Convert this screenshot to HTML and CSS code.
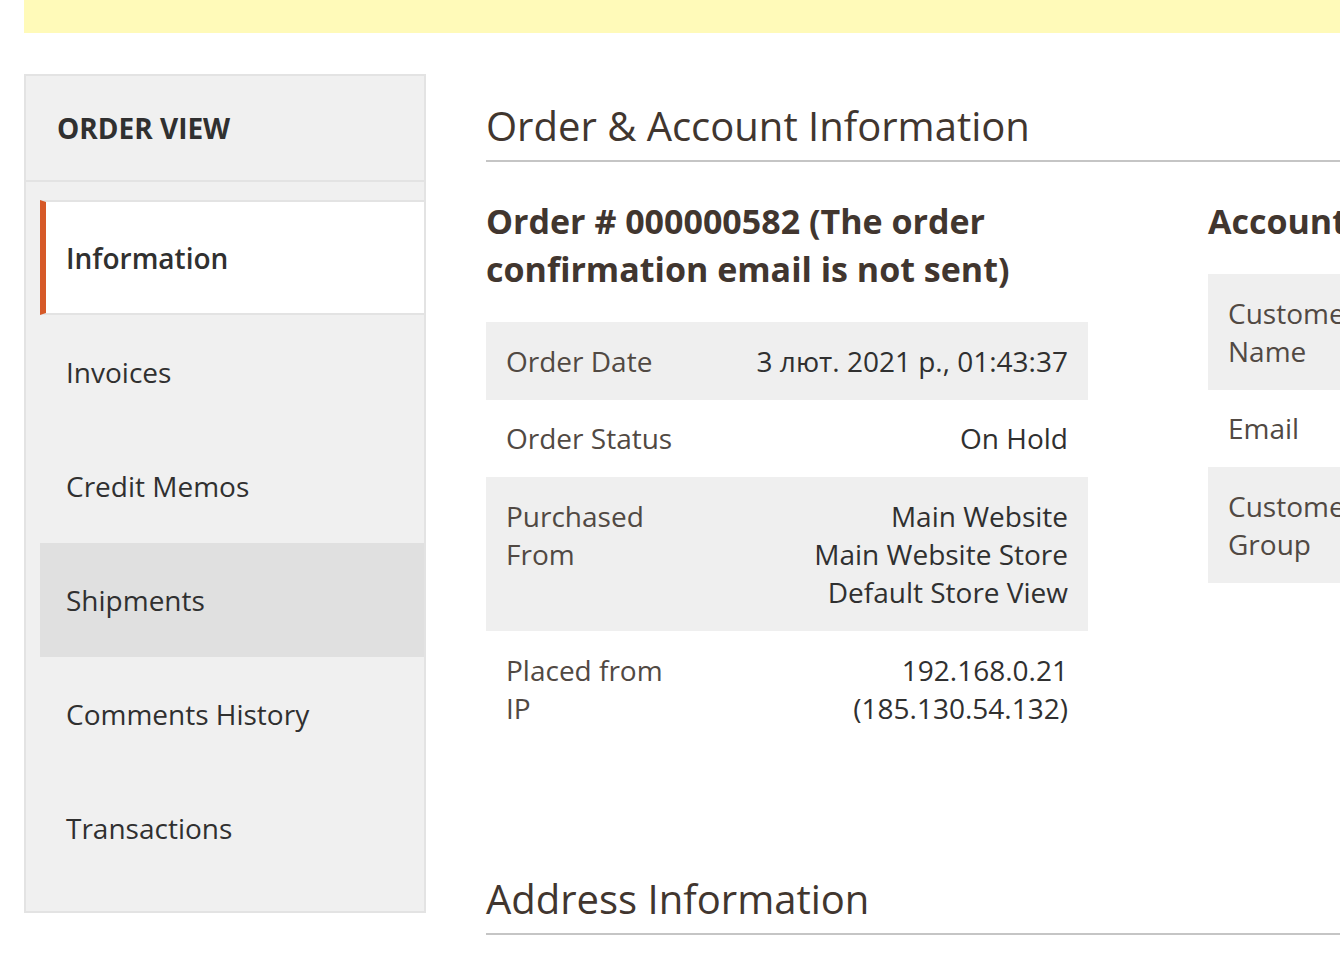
FILE: index.html
```html
<!DOCTYPE html>
<html lang="en">
<head>
<meta charset="utf-8">
<title>Order View</title>
<link rel="stylesheet" href="styles.css">
</head>
<body>
<div class="page">
  <div class="message"></div>
  <div class="layout">
    <aside class="nav">
      <div class="nav-title">ORDER VIEW</div>
      <ul class="nav-items">
        <li class="nav-item active">Information</li>
        <li class="nav-item">Invoices</li>
        <li class="nav-item">Credit Memos</li>
        <li class="nav-item hover">Shipments</li>
        <li class="nav-item">Comments History</li>
        <li class="nav-item">Transactions</li>
      </ul>
    </aside>
    <main class="main">
      <section class="section">
        <h2 class="section-title">Order &amp; Account Information</h2>
        <div class="columns">
          <div class="column">
            <h3 class="item-title">Order # 000000582 (The order confirmation email is not sent)</h3>
            <div class="info-table">
              <div class="row shaded"><div class="label">Order Date</div><div class="value">3 лют. 2021 р., 01:43:37</div></div>
              <div class="row"><div class="label">Order Status</div><div class="value">On Hold</div></div>
              <div class="row shaded"><div class="label">Purchased From</div><div class="value">Main Website<br>Main Website Store<br>Default Store View</div></div>
              <div class="row"><div class="label">Placed from IP</div><div class="value">192.168.0.21<br>(185.130.54.132)</div></div>
            </div>
          </div>
          <div class="column">
            <h3 class="item-title">Account Information</h3>
            <div class="info-table">
              <div class="row shaded"><div class="label">Customer Name</div><div class="value"></div></div>
              <div class="row"><div class="label">Email</div><div class="value"></div></div>
              <div class="row shaded"><div class="label">Customer Group</div><div class="value"></div></div>
            </div>
          </div>
        </div>
      </section>
      <section class="section">
        <h2 class="section-title">Address Information</h2>
      </section>
    </main>
  </div>
</div>
</body>
</html>
```
FILE: styles.css
```css
html, body {
  margin: 0;
  padding: 0;
  overflow: hidden;
  background: #fff;
}
body {
  font-family: "Open Sans", "Liberation Sans", sans-serif;
  color: #303030;
  width: 1340px;
  height: 960px;
}
.page {
  display: flex;
  flex-direction: column;
}
.message {
  height: 33px;
  margin-left: 24px;
  background: #fffab9;
}
.layout {
  display: flex;
  gap: 60px;
  padding: 41px 0 0 24px;
}
.nav {
  flex: 0 0 402px;
  box-sizing: border-box;
  align-self: flex-start;
  background: #f0f0f0;
  border: 2px solid #e3e3e3;
}
.nav-title {
  height: 106px;
  box-sizing: border-box;
  display: flex;
  align-items: center;
  padding-left: 31px;
  border-bottom: 2px solid #e3e3e3;
  font-size: 28px;
  font-weight: 700;
  color: #303030;
}
.nav-items {
  list-style: none;
  margin: 0;
  padding: 18px 0 26px 14px;
}
.nav-item {
  height: 114px;
  box-sizing: border-box;
  display: flex;
  align-items: center;
  padding-left: 26px;
  font-size: 28px;
  color: #303030;
}
.nav-item.active {
  height: 115px;
  background: #fff;
  border-left: 6px solid #d65928;
  border-top: 2px solid #e3e3e3;
  border-bottom: 2px solid #e3e3e3;
  padding-left: 20px;
  font-weight: 600;
}
.nav-item.hover {
  background: #e0e0e0;
}
.main {
  flex: 0 0 1330px;
  padding-top: 27px;
}
.section-title {
  margin: 0;
  font-size: 40px;
  line-height: 50px;
  font-weight: 400;
  color: #41362f;
  padding-bottom: 9px;
  border-bottom: 2px solid #c5c5c5;
}
.columns {
  display: flex;
  gap: 120px;
  margin-top: 35px;
  height: 677px;
}
.column {
  flex: 0 0 602px;
}
.item-title {
  margin: 0 0 29px;
  font-size: 34px;
  line-height: 48px;
  font-weight: 700;
  color: #41362f;
}
.info-table {
  display: flex;
  flex-direction: column;
}
.row {
  display: flex;
  padding: 19.8px 20px;
  font-size: 28px;
  line-height: 38px;
}
.row.shaded {
  background: #efefef;
}
.label {
  flex: 0 0 180px;
  color: #514943;
}
.value {
  flex: 1;
  text-align: right;
  color: #303030;
}
```
